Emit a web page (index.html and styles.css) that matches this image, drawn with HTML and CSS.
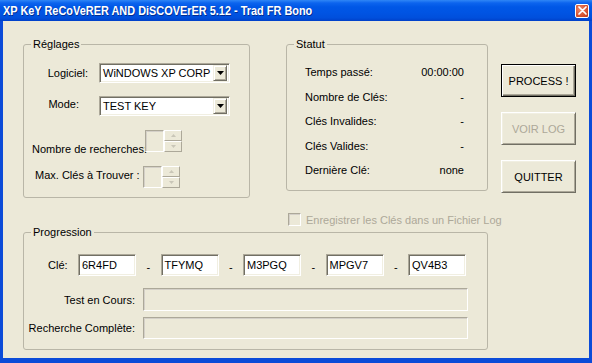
FILE: index.html
```html
<!DOCTYPE html>
<html lang="fr">
<head>
  <meta charset="UTF-8">
  <title>XP KeY ReCoVeRER AND DiSCOVErER 5.12</title>
  <link rel="stylesheet" href="styles.css">
</head>
<body>
  <div class="window">
    <div class="titlebar">
      <span class="title">XP KeY ReCoVeRER AND DiSCOVErER 5.12 - Trad FR Bono</span>
      <span class="close">
        <svg width="9" height="9" viewBox="0 0 9 9"><path d="M1 1L8 8M8 1L1 8" stroke="#fff" stroke-width="1.7" stroke-linecap="round"/></svg>
      </span>
    </div>

    <div class="client">
      <div class="top">
        <fieldset class="group settings">
          <legend>Réglages</legend>

          <div class="field field-soft">
            <span class="lbl lbl-soft">Logiciel:</span>
            <div class="combo">
              <span class="combo-text">WiNDOWS XP CORP</span>
              <span class="drop"><svg width="7" height="4" viewBox="0 0 7 4"><path d="M0 0H7L3.5 4Z"/></svg></span>
            </div>
          </div>

          <div class="field field-mode">
            <span class="lbl lbl-mode">Mode:</span>
            <div class="combo">
              <span class="combo-text">TEST KEY</span>
              <span class="drop"><svg width="7" height="4" viewBox="0 0 7 4"><path d="M0 0H7L3.5 4Z"/></svg></span>
            </div>
          </div>

          <div class="field field-count">
            <span class="lbl lbl-count">Nombre de recherches:</span>
            <div class="spin">
              <span class="spin-edit"></span>
              <span class="updown">
                <span class="ud-btn"><svg width="5" height="3" viewBox="0 0 5 3"><path d="M0 3H5L2.5 0Z"/></svg></span>
                <span class="ud-btn"><svg width="5" height="3" viewBox="0 0 5 3"><path d="M0 0H5L2.5 3Z"/></svg></span>
              </span>
            </div>
          </div>

          <div class="field field-max">
            <span class="lbl lbl-max">Max. Clés à Trouver :</span>
            <div class="spin">
              <span class="spin-edit"></span>
              <span class="updown">
                <span class="ud-btn"><svg width="5" height="3" viewBox="0 0 5 3"><path d="M0 3H5L2.5 0Z"/></svg></span>
                <span class="ud-btn"><svg width="5" height="3" viewBox="0 0 5 3"><path d="M0 0H5L2.5 3Z"/></svg></span>
              </span>
            </div>
          </div>
        </fieldset>

        <fieldset class="group status">
          <legend>Statut</legend>
          <div class="stats">
            <div class="stat"><span>Temps passé:</span><span>00:00:00</span></div>
            <div class="stat"><span>Nombre de Clés:</span><span>-</span></div>
            <div class="stat"><span>Clés Invalides:</span><span>-</span></div>
            <div class="stat"><span>Clés Valides:</span><span>-</span></div>
            <div class="stat"><span>Dernière Clé:</span><span>none</span></div>
          </div>
        </fieldset>

        <div class="actions">
          <button class="btn btn-default">PROCESS !</button>
          <button class="btn" disabled>VOIR LOG</button>
          <button class="btn">QUITTER</button>
        </div>
      </div>

      <div class="logopt"><span class="check"></span>Enregistrer les Clés dans un Fichier Log</div>

      <fieldset class="group progress">
        <legend>Progression</legend>

        <div class="keys">
          <span class="lbl lbl-key">Clé:</span>
          <span class="key">6R4FD</span>
          <span class="sep">-</span>
          <span class="key">TFYMQ</span>
          <span class="sep">-</span>
          <span class="key">M3PGQ</span>
          <span class="sep">-</span>
          <span class="key">MPGV7</span>
          <span class="sep">-</span>
          <span class="key">QV4B3</span>
        </div>

        <div class="prog-row">
          <span class="lbl lbl-prog">Test en Cours:</span>
          <span class="meter"></span>
        </div>
        <div class="prog-row prog-row-last">
          <span class="lbl lbl-prog">Recherche Complète:</span>
          <span class="meter meter-last"></span>
        </div>
      </fieldset>
    </div>
  </div>
</body>
</html>
```

FILE: styles.css
```css
* {
  box-sizing: border-box;
}

body {
  margin: 0;
  font-family: "Liberation Sans", Arial, sans-serif;
  font-size: 11px;
  color: #000;
}

.window {
  width: 592px;
  height: 363px;
  background: #ECE9D8;
  overflow: hidden;
}

/* title bar */
.titlebar {
  height: 21px;
  display: flex;
  align-items: center;
  justify-content: space-between;
  padding: 0 3px 0 3px;
  background: linear-gradient(to bottom, #2F86F6 0, #0C64EE 3px, #0057E6 7px, #0054E3 60%, #004FDC 85%, #0040C8 100%);
}

/* caption font is a condensed bold, squeeze Arial to match */
.title {
  color: #fff;
  font-weight: bold;
  font-size: 13px;
  white-space: nowrap;
  transform: scaleX(0.84);
  transform-origin: left center;
  text-shadow: 1px 1px rgba(0, 20, 90, 0.6);
}

.close {
  width: 14px;
  height: 14px;
  display: flex;
  align-items: center;
  justify-content: center;
  border: 1px solid #fff;
  border-radius: 2px;
  background: radial-gradient(circle at 35% 35%, #EE8A6C, #D5512F 60%, #B8381A);
}

/* window body */
.client {
  height: 342px;
  border: solid #0B4BD8;
  border-width: 0 3px 5px 3px;
}

.top {
  display: flex;
  align-items: flex-start;
  padding: 17px 0 0 20px;
}

.group {
  margin: 0;
  padding: 0;
  min-width: 0;
  border: 1px solid #B9B6A7;
  border-radius: 3px;
}

legend {
  margin-left: 7px;
  padding: 0 2px;
  line-height: 13px;
}

.lbl {
  white-space: nowrap;
}

.field {
  display: flex;
  align-items: center;
}

/* Réglages */
.settings {
  width: 227px;
  height: 160px;
}

.field-soft {
  margin-top: 12px;
}

.lbl-soft {
  width: 64px;
  text-align: right;
  margin-right: 11px;
}

.field-mode {
  margin-top: 13px;
}

.lbl-mode {
  width: 55px;
  text-align: right;
  margin-right: 20px;
  margin-bottom: 5px;
}

.field-count {
  margin-top: 14px;
  padding-left: 8px;
  align-items: flex-start;
}

.lbl-count {
  width: 113px;
  margin-top: 13px;
}

.field-max {
  margin-top: 11px;
  padding-left: 11px;
  align-items: flex-start;
}

.lbl-max {
  width: 108px;
  margin-top: 3px;
}

.combo {
  width: 131px;
  height: 20px;
  display: flex;
  align-items: center;
  padding: 2px;
  background: #fff;
  border: 1px solid;
  border-color: #ACA899 #fff #fff #ACA899;
  box-shadow: inset 1px 1px #716F64, inset -1px -1px #F1EFE2;
}

.combo-text {
  flex: 1;
  min-width: 0;
  padding-left: 1px;
  white-space: nowrap;
}

.drop {
  flex: none;
  width: 14px;
  height: 16px;
  display: flex;
  align-items: center;
  justify-content: center;
  background: #ECE9D8;
  border: 1px solid;
  border-color: #F1EFE2 #716F64 #716F64 #F1EFE2;
  box-shadow: inset 1px 1px #fff, inset -1px -1px #ACA899;
}

.spin {
  display: flex;
  width: 37px;
  height: 22px;
}

.spin-edit {
  width: 19px;
  border: 1px solid;
  border-color: #ACA899 #fff #fff #ACA899;
  box-shadow: inset 1px 1px #D4D0C8;
}

.updown {
  width: 18px;
  display: flex;
  flex-direction: column;
}

.ud-btn {
  flex: 1;
  display: flex;
  align-items: center;
  justify-content: center;
  border: 1px solid;
  border-color: #fff #ACA899 #ACA899 #fff;
  fill: #C9C6B8;
}

/* Statut */
.status {
  width: 202px;
  height: 153px;
  margin-left: 36px;
}

.stats {
  padding-top: 9px;
}

.stat {
  display: flex;
  justify-content: space-between;
  align-items: center;
  height: 24.5px;
  padding: 0 23px 0 18px;
}

/* buttons */
.actions {
  display: flex;
  flex-direction: column;
  gap: 15px;
  margin-left: 13px;
  padding-top: 26px;
}

.btn {
  width: 75px;
  height: 33px;
  padding: 0;
  font: inherit;
  color: #000;
  background: #ECE9D8;
  border: 1px solid;
  border-color: #fff #716F64 #716F64 #fff;
  box-shadow: inset 1px 1px #F1EFE2, inset -1px -1px #ACA899;
}

.btn-default {
  border-color: #000;
  box-shadow: inset 1px 1px #fff, inset -1px -1px #716F64, inset -2px -2px #ACA899;
}

.btn:disabled {
  color: #ACA899;
}

/* log option */
.logopt {
  display: flex;
  align-items: center;
  height: 13px;
  margin: 15px 0 0 285px;
  color: #ACA899;
  white-space: nowrap;
}

.check {
  width: 13px;
  height: 13px;
  margin-right: 5px;
  border: 1px solid;
  border-color: #ACA899 #fff #fff #ACA899;
  box-shadow: inset 1px 1px #D4D0C8;
}

/* Progression */
.progress {
  width: 465px;
  height: 124px;
  margin-left: 20px;
}

.keys {
  display: flex;
  align-items: center;
  margin-top: 15px;
  padding-left: 24px;
}

.lbl-key {
  width: 30px;
}

.key {
  width: 58px;
  height: 22px;
  line-height: 20px;
  padding-left: 3px;
  background: #fff;
  border: 1px solid;
  border-color: #ACA899 #fff #fff #ACA899;
  box-shadow: inset 1px 1px #716F64, inset -1px -1px #F1EFE2;
}

.sep {
  width: 24.5px;
  text-align: center;
  padding-top: 3px;
}

.prog-row {
  display: flex;
  align-items: center;
  margin-top: 12px;
}

.prog-row-last {
  margin-top: 6px;
}

.lbl-prog {
  width: 111px;
  text-align: right;
  margin-right: 8px;
}

.meter {
  width: 325px;
  height: 23px;
  border: 1px solid;
  border-color: #ACA899 #fff #fff #ACA899;
  box-shadow: inset 1px 1px #D4D0C8;
}

.meter-last {
  height: 22px;
}
```
